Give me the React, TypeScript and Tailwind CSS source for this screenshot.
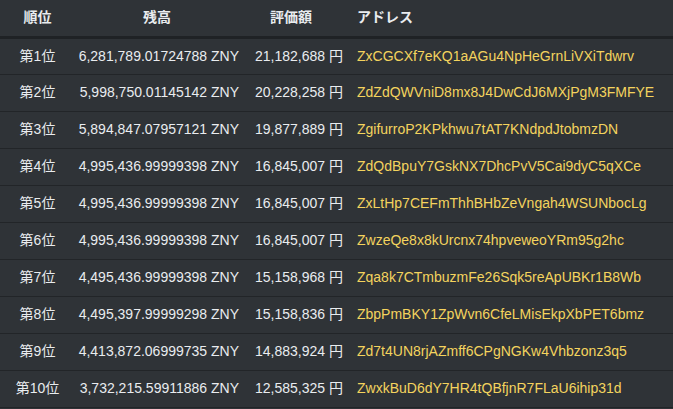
const rows = [
  ["第1位","6,281,789.01724788","21,182,688","ZxCGCXf7eKQ1aAGu4NpHeGrnLiVXiTdwrv"],
  ["第2位","5,998,750.01145142","20,228,258","ZdZdQWVniD8mx8J4DwCdJ6MXjPgM3FMFYE"],
  ["第3位","5,894,847.07957121","19,877,889","ZgifurroP2KPkhwu7tAT7KNdpdJtobmzDN"],
  ["第4位","4,995,436.99999398","16,845,007","ZdQdBpuY7GskNX7DhcPvV5Cai9dyC5qXCe"],
  ["第5位","4,995,436.99999398","16,845,007","ZxLtHp7CEFmThhBHbZeVngah4WSUNbocLg"],
  ["第6位","4,995,436.99999398","16,845,007","ZwzeQe8x8kUrcnx74hpveweoYRm95g2hc"],
  ["第7位","4,495,436.99999398","15,158,968","Zqa8k7CTmbuzmFe26Sqk5reApUBKr1B8Wb"],
  ["第8位","4,495,397.99999298","15,158,836","ZbpPmBKY1ZpWvn6CfeLMisEkpXbPET6bmz"],
  ["第9位","4,413,872.06999735","14,883,924","Zd7t4UN8rjAZmff6CPgNGKw4Vhbzonz3q5"],
  ["第10位","3,732,215.59911886","12,585,325","ZwxkBuD6dY7HR4tQBfjnR7FLaU6ihip31d"],
];
export default function App() {
  return (
    <div className="w-[673px] h-[409px] bg-[#2f3337] text-[#e9ecef] text-[14px] overflow-hidden" style={{fontFamily:'"Liberation Sans","Noto Sans CJK JP",sans-serif'}}>
      <table className="w-full border-collapse table-fixed">
        <thead>
          <tr className="h-[37px] border-b-[3px] border-[#1f2225] font-bold">
            <th className="w-[75px] text-center">順位</th>
            <th className="w-[164px] text-center">残高</th>
            <th className="w-[104px] text-center">評価額</th>
            <th className="text-left pl-[14px]">アドレス</th>
          </tr>
        </thead>
        <tbody>
          {rows.map(r => (
            <tr key={r[0]} className="h-[37px] border-b border-[#222528]">
              <td className="text-center whitespace-nowrap">{r[0]}</td>
              <td className="text-right whitespace-nowrap">{r[1]} ZNY</td>
              <td className="text-right whitespace-nowrap">{r[2]} 円</td>
              <td className="pl-[14px] text-[#f4d35e] whitespace-nowrap">{r[3]}</td>
            </tr>
          ))}
        </tbody>
      </table>
    </div>
  );
}
